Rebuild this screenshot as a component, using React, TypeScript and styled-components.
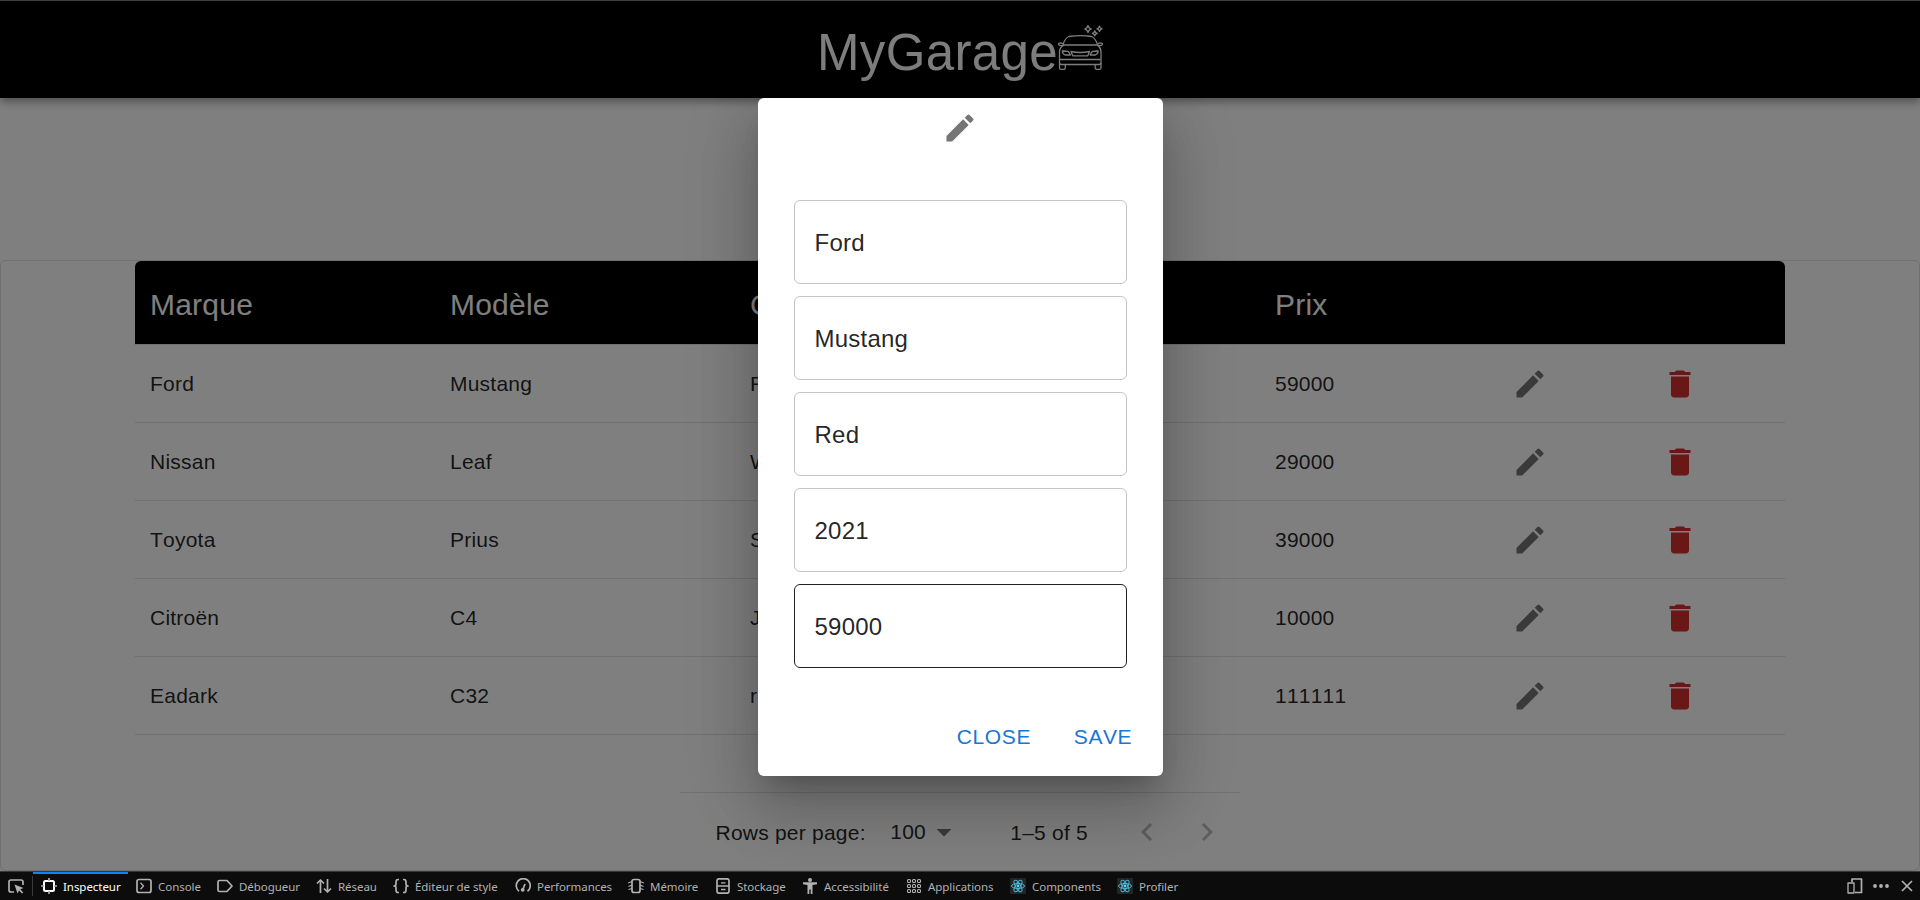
import React from "react";
import styled, { createGlobalStyle } from "styled-components";

const GlobalStyle = createGlobalStyle`
  * { box-sizing: border-box; }
  body { margin: 0; background: #fff; font-family: "Liberation Sans", Helvetica, Arial, sans-serif; font-kerning: none; color: rgba(0,0,0,.87); overflow: hidden; }
`;

const Screen = styled.div`
  display: flex;
  flex-direction: column;
  height: 900px;
  overflow: hidden;
`;

const Page = styled.div`
  position: relative;
  height: 871px;
  display: flex;
  flex-direction: column;
`;

const AppBar = styled.header`
  height: 98px;
  flex: none;
  border-top: 1px solid #7c7c7c;
  background: #000;
  color: #fff;
  display: flex;
  justify-content: center;
  align-items: flex-start;
  padding-left: 2px;
  box-shadow: 0 3px 6px -1.5px rgba(0,0,0,.2), 0 6px 7.5px rgba(0,0,0,.14), 0 1.5px 15px rgba(0,0,0,.12);
`;

const Brand = styled.h4`
  margin: 0;
  padding-top: 20px;
  font-size: 51px;
  font-weight: 400;
  line-height: 63px;
  letter-spacing: 0.00735em;
`;

const BrandIcon = styled.svg`
  width: 48px;
  height: 48px;
  margin: 22px 0 0 -1px;
`;

const Grid = styled.section`
  margin-top: 162px;
  height: 611px;
  flex: none;
  border: 1px solid #e0e0e0;
  border-radius: 6px;
  display: flex;
  flex-direction: column;
  align-items: center;
`;

const Table = styled.div`
  width: 1650px;
  font-size: 21px;
  letter-spacing: 0.01071em;
`;

const columns = "300px 300px 262px 263px 195px 150px 150px";

const HeadRow = styled.div`
  display: grid;
  grid-template-columns: ${columns};
  align-items: center;
  height: 83px;
  padding-top: 4px;
  border-radius: 6px 6px 0 0;
  background: #000;
  color: #fff;
  font-size: 30px;
`;

const Row = styled.div<{ $first?: boolean }>`
  display: grid;
  grid-template-columns: ${columns};
  align-items: center;
  height: ${(p) => (p.$first ? 79 : 78)}px;
  border-bottom: 1px solid #e0e0e0;
  border-top: ${(p) => (p.$first ? "1px solid #e0e0e0" : "none")};
`;

const Cell = styled.div`
  padding-left: 15px;
  padding-top: 1px;
`;

const IconCell = styled.div<{ $color: string }>`
  display: flex;
  justify-content: center;
  color: ${(p) => p.$color};
`;

const MaterialIcon = styled.svg`
  width: 36px;
  height: 36px;
  fill: currentColor;
  display: block;
`;

const Footer = styled.div`
  width: 560px;
  height: 78px;
  margin-top: 57px;
  border-top: 1px solid #e0e0e0;
  display: flex;
  align-items: center;
  padding: 2px 15px 0 35.5px;
  font-size: 21px;
  letter-spacing: 0.01071em;
`;

const PageSize = styled.span`
  display: flex;
  align-items: center;
  width: 120px;
  margin-left: 24.5px;
  padding-bottom: 1px;
`;

const Caret = styled.svg`
  width: 36px;
  height: 36px;
  fill: rgba(0, 0, 0, 0.54);
`;

const Arrow = styled(MaterialIcon)`
  color: rgba(0, 0, 0, 0.26);
`;

const Arrows = styled.span`
  display: flex;
  gap: 24px;
  margin-left: auto;
  padding-bottom: 2px;
`;

const Backdrop = styled.div`
  position: absolute;
  inset: 0;
  background: rgba(0, 0, 0, 0.5);
  display: flex;
  justify-content: center;
  align-items: flex-start;
  padding: 98px 0 0 1px;
  overflow: hidden;
`;

const Dialog = styled.div`
  width: 405px;
  height: 678px;
  border-radius: 6px;
  background: #fff;
  display: flex;
  flex-direction: column;
  box-shadow: 0 16.5px 22.5px -10.5px rgba(0,0,0,.2), 0 36px 57px 4.5px rgba(0,0,0,.14), 0 13.5px 69px 12px rgba(0,0,0,.12);
`;

const DialogTitle = styled.div`
  height: 102px;
  flex: none;
  padding: 12px 1px 0 0;
  display: flex;
  justify-content: center;
  align-items: flex-start;
  color: #757575;
`;

const Fields = styled.div`
  display: flex;
  flex-direction: column;
  gap: 12px;
  padding: 0 36px;
`;

const Field = styled.div<{ $active?: boolean }>`
  height: 84px;
  display: flex;
  align-items: center;
  padding: 1px 19.5px 0;
  border: 1px solid ${(p) => (p.$active ? "#212121" : "#c4c4c4")};
  border-radius: 6px;
  font-size: 24px;
  letter-spacing: 0.00938em;
`;

const Actions = styled.div`
  display: flex;
  justify-content: flex-end;
  gap: 12px;
  padding: 41px 12px 12px;
`;

const Button = styled.button`
  min-width: 96px;
  height: 55px;
  padding: 0 12px;
  border: 0;
  background: none;
  color: #1976d2;
  font: 400 21px/55px "Liberation Sans", Helvetica, Arial, sans-serif;
  font-kerning: none;
  letter-spacing: 0.02857em;
`;

const DevTools = styled.footer`
  flex: none;
  height: 29px;
  border-top: 1px solid #38383d;
  background: #0c0c0d;
  display: flex;
  color: #b1b1b3;
`;

const ToolIcon = styled.svg`
  width: 16px;
  height: 16px;
  flex: none;
  fill: none;
  stroke: currentColor;
  stroke-width: 1.7;
  stroke-linejoin: round;
`;

const Picker = styled.div`
  width: 33px;
  display: flex;
  align-items: center;
  padding-left: 8px;
  background: linear-gradient(#38383d, #38383d) 32px 4px / 1px 20px no-repeat;
`;

const Tab = styled.div<{ $w: number; $active?: boolean }>`
  width: ${(p) => p.$w}px;
  height: 28px;
  display: flex;
  align-items: center;
  gap: 6px;
  padding-left: 8px;
  color: ${(p) => (p.$active ? "#fff" : "#b1b1b3")};
  box-shadow: ${(p) => (p.$active ? "inset 0 2px 0 #0a84ff" : "none")};
  white-space: nowrap;
`;

const TabLabel = styled.span`
  font: 11.5px/16px "Noto Sans", sans-serif;
  letter-spacing: -0.05px;
  padding-top: 1px;
`;

const Controls = styled.div`
  margin-left: auto;
  display: flex;
  align-items: center;
  gap: 10px;
  padding-right: 5px;
`;

const EditIcon = () => (
  <MaterialIcon viewBox="0 0 24 24">
    <path d="M3 17.25V21h3.75L17.81 9.94l-3.75-3.75L3 17.25zM20.71 7.04c.39-.39.39-1.02 0-1.41l-2.34-2.34a.9959.9959 0 0 0-1.41 0l-1.83 1.83 3.75 3.75 1.83-1.83z" />
  </MaterialIcon>
);

const DeleteIcon = () => (
  <MaterialIcon viewBox="0 0 24 24">
    <path d="M6 19c0 1.1.9 2 2 2h8c1.1 0 2-.9 2-2V7H6v12zM19 4h-3.5l-1-1h-5l-1 1H5v2h14V4z" />
  </MaterialIcon>
);

const CarIcon = () => (
  <BrandIcon viewBox="0 0 48 48" fill="none" stroke="#fff" strokeWidth="1.3" strokeLinejoin="round">
    <path d="M6 21.500 Q8.500 14.500 12 13.500 Q23.500 11.800 34.500 13.500 Q38 14.500 40.500 21.500" />
    <path d="M6.500 22H40.500M6.500 22Q2.500 25 2.500 28.500V39.500Q2.500 41.500 4.500 41.500H42Q44 41.500 44 39.500V28.500Q44 25 40.500 22" />
    <path d="M6.500 22.500Q1.500 23 1.500 21Q1.500 19.800 4 19.800Q6 20 6.500 21.500M40.500 22.500Q45.500 23 45.500 21Q45.500 19.800 43 19.800Q41 20 40.500 21.500" />
    <path d="M5.300 28L11 28.300Q12.800 30 13.300 32H8Q5.500 31 5.300 28ZM41.200 28L35.500 28.300Q33.700 30 33.200 32H38.500Q41 31 41.200 28ZM14 28.500Q23.300 30.500 32.500 28.500L30.800 32.800H15.700Z" />
    <path d="M3 36.500H43.500M2.500 40V45Q2.500 46.300 3.800 46.300H7Q8.300 46 8.300 44.800V42M44 40V45Q44 46.300 42.700 46.300H39.500Q38.200 46 38.200 44.800V42" />
    <path d="M31 2.600L32.200 4.900L34.300 6L32.200 7.100L31 9.400L29.800 7.100L27.700 6L29.800 4.900ZM42.500 3.200L43.400 5L45 5.900L43.400 6.800L42.500 8.500L41.600 6.800L40 5.900L41.600 5ZM37.800 7.800L38.600 9.500L40.200 10.300L38.600 11.100L37.800 12.800L37 11.100L35.400 10.300L37 9.500Z" />
  </BrandIcon>
);

const ReactMark = () => (
  <ToolIcon viewBox="0 0 16 16">
    <rect width="16" height="16" rx="1" fill="#222426" stroke="none" />
    <g stroke="#4fb3d4" strokeWidth="1">
      <ellipse cx="8" cy="8" rx="6.500" ry="2.500" />
      <ellipse cx="8" cy="8" rx="6.500" ry="2.500" transform="rotate(60 8 8)" />
      <ellipse cx="8" cy="8" rx="6.500" ry="2.500" transform="rotate(120 8 8)" />
    </g>
    <circle cx="8" cy="8" r="1.400" fill="#61dafb" stroke="none" />
  </ToolIcon>
);

const icon = (children: React.ReactNode) => <ToolIcon viewBox="0 0 16 16">{children}</ToolIcon>;

const tabs: { label: string; width: number; icon: React.ReactNode }[] = [
  { label: "Inspecteur", width: 95, icon: icon(<><rect x="3" y="3" width="10" height="10" rx="1.500" strokeWidth="2" /><path d="M8 0v3M8 13v3M0 8h3M13 8h3" stroke="#b1b1b3" /></>) },
  { label: "Console", width: 81, icon: icon(<><rect x="1" y="1.500" width="14" height="13" rx="2" /><path d="M4.500 4.800L7.500 8l-3 3.200" strokeWidth="1.300" /></>) },
  { label: "Débogueur", width: 99, icon: icon(<path d="M2.500 2.500H10L15 8l-5 5.500H2.500Q1 13.500 1 12V4Q1 2.500 2.500 2.500Z" />) },
  { label: "Réseau", width: 77, icon: icon(<path d="M4.500 15V2M1 5.500L4.500 2L8 5.500M11.500 1V14M8 10.500L11.500 14L15 10.500" />) },
  { label: "Éditeur de style", width: 122, icon: icon(<path d="M6 1.500H5Q3 1.500 3 4V6Q3 8 1 8Q3 8 3 10V12Q3 14.500 5 14.500H6M10 1.500H11Q13 1.500 13 4V6Q13 8 15 8Q13 8 13 10V12Q13 14.500 11 14.500H10" />) },
  { label: "Performances", width: 113, icon: icon(<><path d="M4 13.200A7 7 0 1 1 12.500 13.200" /><circle cx="7.700" cy="11.800" r="1.900" fill="currentColor" stroke="none" /><path d="M8 11L10 6" /></>) },
  { label: "Mémoire", width: 87, icon: icon(<><rect x="4" y="1.500" width="8" height="13" rx="2" /><path d="M0 5L4 3.500M0.500 8.500L4 7M0.500 11.500L4 10.500M16 5L12 3.500M15.500 8.500L12 7M15.500 11.500L12 10.500" strokeWidth="1.100" /></>) },
  { label: "Stockage", width: 87, icon: icon(<><rect x="2" y="0.800" width="12" height="14.400" rx="2" /><path d="M2 8H14M6 4.800H10.500M6 11.500H10.500" strokeWidth="1.300" /></>) },
  { label: "Accessibilité", width: 104, icon: icon(<><circle cx="8" cy="2" r="2" fill="currentColor" stroke="none" /><path d="M1 4.300H15V6.300L10.500 7V16H8.700V11.500H7.300V16H5.500V7L1 6.300Z" fill="currentColor" stroke="none" /></>) },
  { label: "Applications", width: 104, icon: icon([1, 6, 11].map((x) => [1, 6, 11].map((y) => <rect key={`${x}-${y}`} x={x + 0.5} y={y + 0.5} width="3" height="3" rx="1" strokeWidth="1.100" />))) },
  { label: "Components", width: 107, icon: <ReactMark /> },
  { label: "Profiler", width: 78, icon: <ReactMark /> },
];

const cars = [
  ["Ford", "Mustang", "Red", "2021", "59000"],
  ["Nissan", "Leaf", "White", "2019", "29000"],
  ["Toyota", "Prius", "Silver", "2018", "39000"],
  ["Citroën", "C4", "Jaune", "2020", "10000"],
  ["Eadark", "C32", "rouge", "2011", "111111"],
];

export default function App() {
  return (
    <Screen>
      <GlobalStyle />
      <Page>
        <AppBar>
          <Brand>MyGarage</Brand>
          <CarIcon />
        </AppBar>
        <Grid>
          <Table>
            <HeadRow>
              {["Marque", "Modèle", "Couleur", "Année", "Prix"].map((h) => (
                <Cell key={h}>{h}</Cell>
              ))}
            </HeadRow>
            {cars.map((car, i) => (
              <Row key={car[0]} $first={i === 0}>
                {car.map((value, j) => (
                  <Cell key={j}>{value}</Cell>
                ))}
                <IconCell $color="rgba(0,0,0,.54)"><EditIcon /></IconCell>
                <IconCell $color="#d32f2f"><DeleteIcon /></IconCell>
              </Row>
            ))}
          </Table>
          <Footer>
            <span>Rows per page:</span>
            <PageSize>
              100
              <Caret viewBox="0 0 24 24"><path d="M7 10l5 5 5-5z" /></Caret>
            </PageSize>
            <span>1–5 of 5</span>
            <Arrows>
              <Arrow viewBox="0 0 24 24"><path d="M15.41 7.41L14 6l-6 6 6 6 1.410-1.410L10.830 12z" /></Arrow>
              <Arrow viewBox="0 0 24 24"><path d="M10 6L8.590 7.410 13.170 12l-4.580 4.590L10 18l6-6z" /></Arrow>
            </Arrows>
          </Footer>
        </Grid>
        <Backdrop>
          <Dialog>
            <DialogTitle><EditIcon /></DialogTitle>
            <Fields>
              {cars[0].map((value, i) => (
                <Field key={i} $active={i === 4}>{value}</Field>
              ))}
            </Fields>
            <Actions>
              <Button>CLOSE</Button>
              <Button>SAVE</Button>
            </Actions>
          </Dialog>
        </Backdrop>
      </Page>
      <DevTools>
        <Picker>
          {icon(<><path d="M6 14H3Q1 14 1 12V4Q1 2 3 2H13Q15 2 15 4V7" /><path d="M6.500 6.500L15.500 10L12.300 11.200L15.300 14.400L14 15.500L11 12.500L9.500 15.500Z" fill="currentColor" stroke="none" /></>)}
        </Picker>
        {tabs.map((tab, i) => (
          <Tab key={tab.label} $w={tab.width} $active={i === 0}>
            {tab.icon}
            <TabLabel>{tab.label}</TabLabel>
          </Tab>
        ))}
        <Controls>
          {icon(<><path d="M5 4V1H14.500V14.500H8" /><rect x="1" y="5" width="6" height="10" strokeWidth="1.300" /></>)}
          {icon(<g fill="currentColor" stroke="none"><circle cx="2" cy="8" r="1.900" /><circle cx="8" cy="8" r="1.900" /><circle cx="14" cy="8" r="1.900" /></g>)}
          {icon(<path d="M3 3L13 13M13 3L3 13" />)}
        </Controls>
      </DevTools>
    </Screen>
  );
}
